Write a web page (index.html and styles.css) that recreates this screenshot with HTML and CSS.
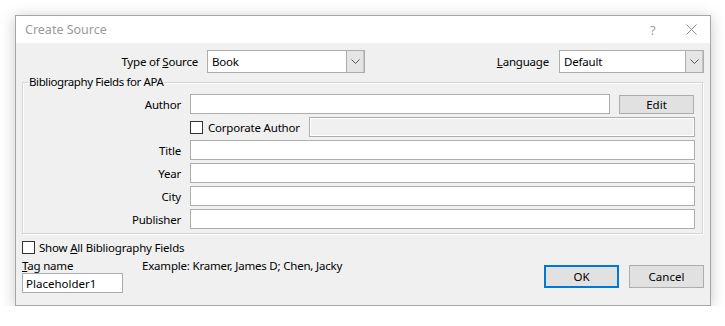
FILE: index.html
```html
<!DOCTYPE html>
<html lang="en">
<head>
    <meta charset="UTF-8">
    <meta name="viewport" content="width=device-width, initial-scale=1.0">
    <title>Create Source</title>
    <link rel="stylesheet" href="styles.css">
</head>
<body>

    <div class="dialog">
        <div class="titlebar">
            <span class="title">Create Source</span>
            <span class="help">?</span>
            <span class="close">
                <svg width="11" height="11" viewBox="0 0 11 11"><path d="M0.5 0.5 L10.5 10.5 M10.5 0.5 L0.5 10.5" stroke="#8a8a8a" stroke-width="1" fill="none"/></svg>
            </span>
        </div>

        <div class="content">
            <div class="top-row">
                <label class="src-label">Type of <u>S</u>ource</label>
                <div class="combo combo-type">
                    <span class="combo-value">Book</span>
                    <span class="combo-drop">
                        <svg width="9" height="5" viewBox="0 0 9 5"><path d="M0.5 0.5 L4.5 4.5 L8.5 0.5" stroke="#555" stroke-width="1" fill="none"/></svg>
                    </span>
                </div>
                <label class="lang-label"><u>L</u>anguage</label>
                <div class="combo combo-lang">
                    <span class="combo-value">Default</span>
                    <span class="combo-drop">
                        <svg width="9" height="5" viewBox="0 0 9 5"><path d="M0.5 0.5 L4.5 4.5 L8.5 0.5" stroke="#555" stroke-width="1" fill="none"/></svg>
                    </span>
                </div>
            </div>

            <fieldset class="fields">
                <legend>Bibliography Fields for APA</legend>

                <div class="field-row">
                    <label class="field-label">Author</label>
                    <input type="text" class="field-input author-input">
                    <button class="edit-btn">Edit</button>
                </div>
                <div class="field-row">
                    <span class="field-label"></span>
                    <span class="check"></span>
                    <label class="corp-label">Corporate Author</label>
                    <input type="text" class="field-input disabled-input" disabled>
                </div>
                <div class="field-row">
                    <label class="field-label">Title</label>
                    <input type="text" class="field-input">
                </div>
                <div class="field-row">
                    <label class="field-label">Year</label>
                    <input type="text" class="field-input">
                </div>
                <div class="field-row">
                    <label class="field-label">City</label>
                    <input type="text" class="field-input">
                </div>
                <div class="field-row">
                    <label class="field-label">Publisher</label>
                    <input type="text" class="field-input">
                </div>
            </fieldset>

            <div class="bottom">
                <div class="bottom-left">
                    <div class="show-all">
                        <span class="check"></span>
                        <label>Show <u>A</u>ll Bibliography Fields</label>
                    </div>
                    <div class="tag-row">
                        <label class="tag-label"><u>T</u>ag name</label>
                        <span class="example">Example: Kramer, James D; Chen, Jacky</span>
                    </div>
                    <input type="text" class="tag-input" value="Placeholder1">
                </div>
                <div class="buttons">
                    <button class="ok-btn">OK</button>
                    <button class="cancel-btn">Cancel</button>
                </div>
            </div>
        </div>
    </div>

</body>
</html>
```

FILE: styles.css
```css
body {
    margin: 0;
    background: #fff;
    font-family: 'Noto Sans', 'Open Sans', sans-serif;
    font-size: 11.5px;
    letter-spacing: -0.2px;
    color: #000;
}
.dialog {
    margin: 15px 0 0 15px;
    width: 696px;
    height: 291px;
    box-sizing: border-box;
    border: 1px solid #a6a6a6;
    background: #f0f0f0;
    box-shadow: 0 2px 14px rgba(0, 0, 0, 0.22);
}
.titlebar {
    height: 27px;
    background: #fff;
    display: flex;
    align-items: center;
    padding-left: 9px;
}
.title {
    flex: 1;
    color: #9a9a9a;
    font-size: 12.5px;
    letter-spacing: 0;
}
.help {
    color: #a0a0a0;
    font-size: 13px;
    width: 14px;
    margin-right: 22px;
}
.close {
    display: flex;
    margin-right: 13px;
}
.content {
    padding: 7px 6px 0 6px;
}
.top-row {
    display: flex;
    align-items: center;
    height: 23px;
}
.src-label {
    width: 176px;
    text-align: right;
    margin-right: 9px;
}
.lang-label {
    margin-left: auto;
    margin-right: 10px;
}
.combo {
    display: flex;
    height: 23px;
    box-sizing: border-box;
    border: 1px solid #adadad;
    background: #fff;
}
.combo-type {
    width: 158px;
}
.combo-lang {
    width: 145px;
}
.combo-value {
    flex: 1;
    padding-left: 4px;
    line-height: 21px;
}
.combo-drop {
    width: 16px;
    background: #e5e5e5;
    border-left: 1px solid #adadad;
    border-right: 1px solid #c4c4c4;
    display: flex;
    align-items: center;
    justify-content: center;
}
.fields {
    margin: 1px 1px 0 0;
    padding: 4px 7px 4px 0;
    border: 1px solid #d5d5d5;
    box-shadow: inset 1px 1px 0 #fff, 1px 1px 0 #fff;
}
.fields legend {
    padding: 0 1px;
    margin-left: 5px;
    line-height: 16px;
    letter-spacing: -0.4px;
}
.field-row {
    display: flex;
    align-items: center;
    height: 20px;
    margin-bottom: 3px;
}
.field-row:last-child {
    margin-bottom: 0;
}
.field-label {
    width: 158px;
    text-align: right;
    margin-right: 9px;
    flex: none;
}
.field-input {
    flex: 1;
    height: 20px;
    box-sizing: border-box;
    border: 1px solid #adadad;
    background: #fff;
    padding: 0 3px;
    font: inherit;
    margin: 0;
}
.disabled-input {
    background: #f0f0f0;
    box-shadow: inset 0 0 0 1px #fff;
}
.edit-btn {
    width: 75px;
    height: 19px;
    margin: 0 1px 0 9px;
    background: #e1e1e1;
    border: 1px solid #adadad;
    font: inherit;
    padding: 0;
}
.check {
    width: 13px;
    height: 13px;
    box-sizing: border-box;
    border: 1px solid #333;
    background: #fff;
    flex: none;
}
.corp-label {
    margin: 0 9px 0 5px;
}
.bottom {
    display: flex;
    justify-content: space-between;
    align-items: flex-end;
    margin-top: 5px;
}
.show-all {
    display: flex;
    align-items: center;
    height: 16px;
}
.show-all label {
    margin-left: 4px;
}
.tag-row {
    display: flex;
    margin-top: 2px;
    height: 16px;
    align-items: center;
}
.tag-label {
    width: 120px;
}
.tag-input {
    width: 101px;
    height: 20px;
    box-sizing: border-box;
    border: 1px solid #adadad;
    background: #fff;
    padding: 0 3px;
    font: inherit;
    margin: 0;
    display: block;
}
.buttons {
    display: flex;
    gap: 10px;
    margin-bottom: 5px;
}
.buttons button {
    width: 75px;
    height: 23px;
    box-sizing: border-box;
    background: #e1e1e1;
    border: 1px solid #adadad;
    font: inherit;
    padding: 0;
}
.buttons .ok-btn {
    border: 2px solid #0078d7;
}
```
